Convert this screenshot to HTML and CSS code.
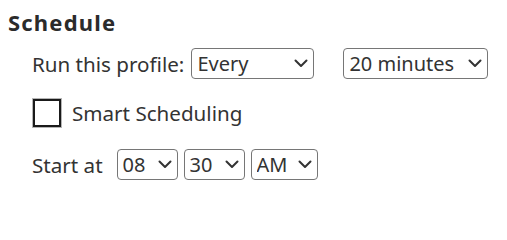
FILE: index.html
```html
<!DOCTYPE html>
<html>
<head>
<meta charset="utf-8">
<link rel="stylesheet" href="styles.css">
</head>
<body>
<section class="schedule">
  <h2 class="title">Schedule</h2>
  <div class="row row-run">
    <label class="label" for="run">Run this profile:</label>
    <span class="select-wrap sel-every">
      <select id="run" class="sel"><option>Every</option><option>Once</option></select>
      <svg class="chev" viewBox="0 0 14 9" width="14" height="9"><path d="M1.5 1.5 L7 7 L12.5 1.5" fill="none" stroke="#333" stroke-width="2" stroke-linecap="round" stroke-linejoin="round"/></svg>
    </span>
    <span class="select-wrap sel-interval">
      <select class="sel"><option>20 minutes</option></select>
      <svg class="chev" viewBox="0 0 14 9" width="14" height="9"><path d="M1.5 1.5 L7 7 L12.5 1.5" fill="none" stroke="#333" stroke-width="2" stroke-linecap="round" stroke-linejoin="round"/></svg>
    </span>
  </div>
  <div class="row row-check">
    <span class="checkbox"></span>
    <span class="label">Smart Scheduling</span>
  </div>
  <div class="row row-start">
    <span class="label label-start">Start at</span>
    <span class="select-wrap">
      <select class="sel"><option>08</option></select>
      <svg class="chev" viewBox="0 0 14 9" width="14" height="9"><path d="M1.5 1.5 L7 7 L12.5 1.5" fill="none" stroke="#333" stroke-width="2" stroke-linecap="round" stroke-linejoin="round"/></svg>
    </span>
    <span class="select-wrap">
      <select class="sel"><option>30</option></select>
      <svg class="chev" viewBox="0 0 14 9" width="14" height="9"><path d="M1.5 1.5 L7 7 L12.5 1.5" fill="none" stroke="#333" stroke-width="2" stroke-linecap="round" stroke-linejoin="round"/></svg>
    </span>
    <span class="select-wrap">
      <select class="sel"><option>AM</option></select>
      <svg class="chev" viewBox="0 0 14 9" width="14" height="9"><path d="M1.5 1.5 L7 7 L12.5 1.5" fill="none" stroke="#333" stroke-width="2" stroke-linecap="round" stroke-linejoin="round"/></svg>
    </span>
  </div>
</section>
</body>
</html>
```

FILE: styles.css
```css
html, body {
  margin: 0;
  padding: 0;
  background: #ffffff;
}
body {
  padding: 8px;
  font-family: "Noto Sans", "Open Sans", sans-serif;
  color: #333333;
}
.title {
  margin: 0;
  font-size: 22px;
  font-weight: 700;
  letter-spacing: 1.2px;
  line-height: 28px;
  color: #2b2b2b;
}
.row {
  display: flex;
  align-items: center;
  padding-left: 24px;
}
.row-run {
  margin-top: 12px;
}
.label {
  font-size: 20.6px;
  line-height: 28px;
}
.select-wrap {
  position: relative;
  display: inline-flex;
}
.sel {
  -webkit-appearance: none;
  appearance: none;
  box-sizing: border-box;
  font-family: "Noto Sans", "Open Sans", sans-serif;
  font-size: 20px;
  color: #333333;
  height: 31px;
  border: 1px solid #767676;
  border-radius: 4px;
  background: #ffffff;
  padding: 0 28px 0 5px;
  margin: 0;
  width: 100%;
}
.chev {
  position: absolute;
  right: 6px;
  top: 11px;
  pointer-events: none;
}
.sel-every {
  margin-left: 7px;
  width: 123px;
}
.sel-interval {
  margin-left: 29px;
  width: 145px;
}
.row-check {
  margin-top: 19px;
}
.checkbox {
  box-sizing: border-box;
  width: 30px;
  height: 30px;
  border: 3px solid #1a1a1a;
  outline: 1px solid #b5b5b5;
  outline-offset: -1px;
  margin-right: 10px;
  background: #fff;
}
.row-start {
  margin-top: 21px;
}
.label-start {
  margin-right: 14px;
}
.row-start .select-wrap {
  width: 61px;
}
.row-start .select-wrap:last-child {
  width: 67px;
}
.row-start .select-wrap + .select-wrap {
  margin-left: 6px;
}
```
